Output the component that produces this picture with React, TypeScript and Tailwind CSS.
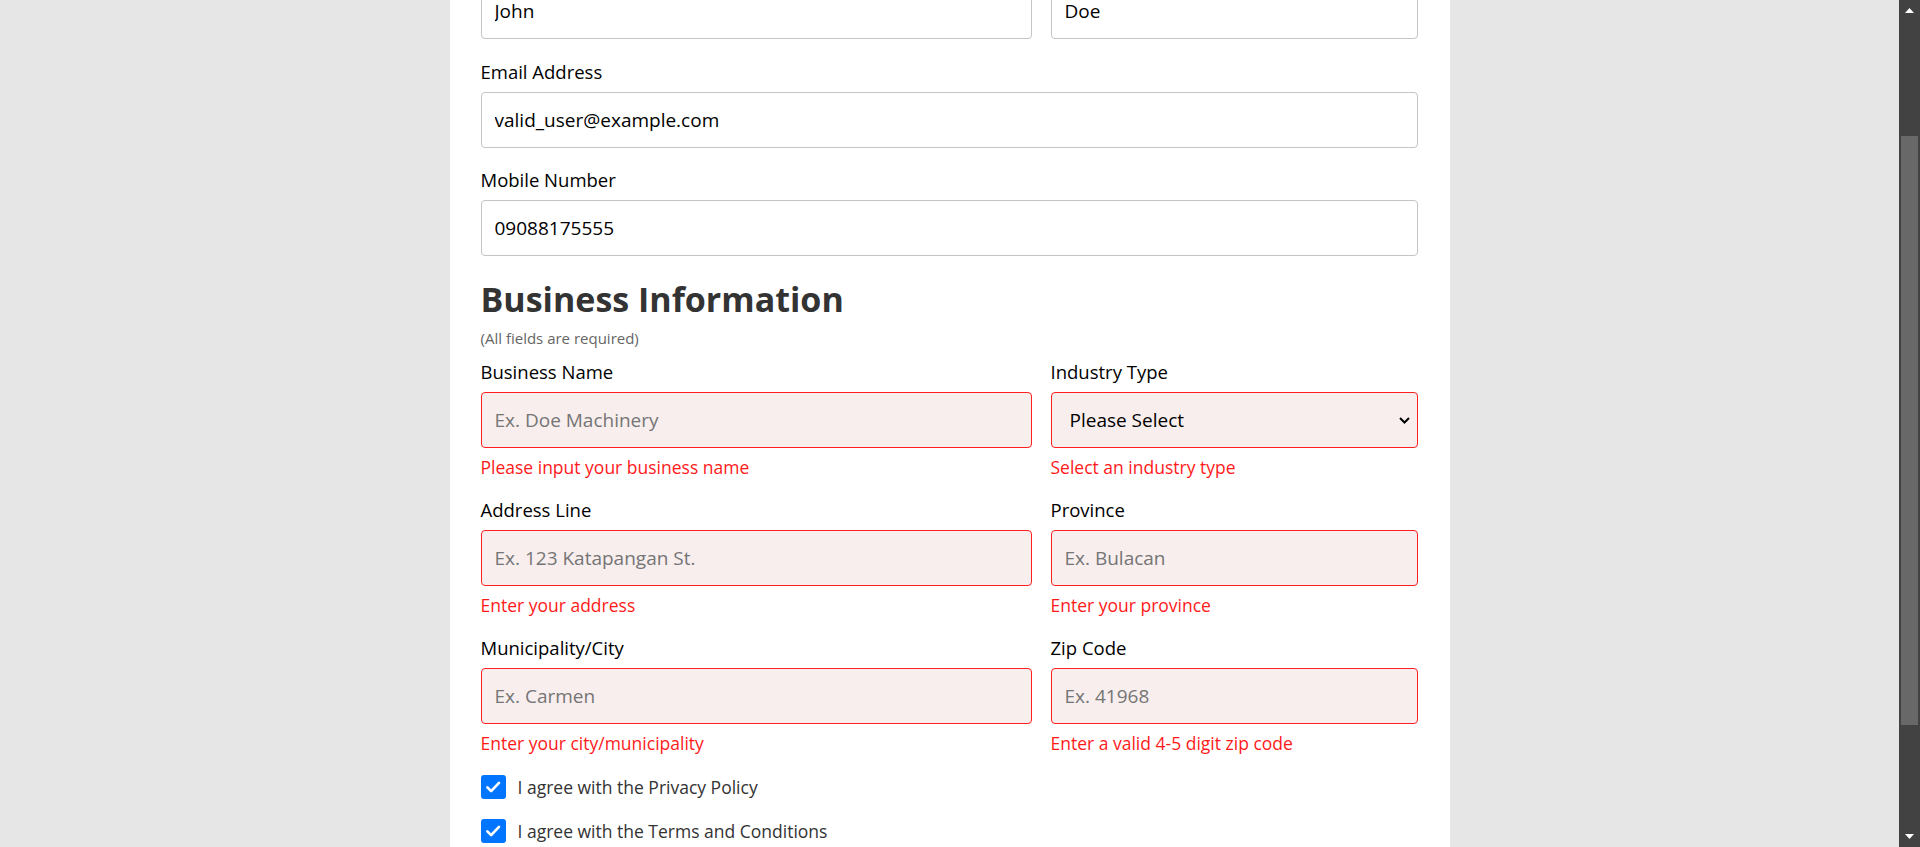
import React from 'react'

const baseInput =
  "h-[56px] w-full rounded-[4px] border px-[13px] text-[19px] text-black outline-none placeholder:text-[#757575] font-['Open_Sans',sans-serif]"

function Label({ children }: { children: React.ReactNode }) {
  return <label className="block text-[18.5px] leading-[26px] mb-[7px] text-black">{children}</label>
}

function ErrorText({ children }: { children: React.ReactNode }) {
  return <p className="mt-[6px] text-[17.5px] leading-[26px] text-[#ff1a1a]">{children}</p>
}

function ErrorField({ label, placeholder, error }: { label: string; placeholder: string; error: string }) {
  return (
    <div>
      <Label>{label}</Label>
      <input
        readOnly
        placeholder={placeholder}
        className={`${baseInput} border-[#ff1f1f] bg-[#f8eeee]`}
      />
      <ErrorText>{error}</ErrorText>
    </div>
  )
}

function Checkbox({ label }: { label: string }) {
  return (
    <div className="flex items-center h-[24px] gap-[12px]">
      <div className="w-[25px] h-[24px] rounded-[3px] bg-[#0075ff] flex items-center justify-center">
        <svg width="18" height="18" viewBox="0 0 24 24" fill="none">
          <path d="M4.5 12.5l5 5L20 6.5" stroke="white" strokeWidth="3.6" strokeLinecap="round" strokeLinejoin="round" />
        </svg>
      </div>
      <span className="text-[17.5px] text-[#333]">{label}</span>
    </div>
  )
}

function Scrollbar() {
  return (
    <div className="w-[21px] h-full bg-[#424242] flex flex-col items-center shrink-0">
      <div className="h-[21px] w-full flex items-center justify-center">
        <svg width="9" height="5" viewBox="0 0 9 5"><path d="M0 5L4.5 0L9 5Z" fill="white" /></svg>
      </div>
      <div className="h-[115px]" />
      <div className="h-[589px] w-[17px] bg-[#686868]" />
      <div className="flex-1" />
      <div className="h-[21px] w-full flex items-center justify-center">
        <svg width="9" height="5" viewBox="0 0 9 5"><path d="M0 0L4.5 5L9 0Z" fill="white" /></svg>
      </div>
    </div>
  )
}

export default function App() {
  return (
    <div className="flex h-[847px] w-[1920px] overflow-hidden bg-[#e6e6e6] font-['Open_Sans',sans-serif]">
      <div className="flex-1 flex justify-center">
        <div className="w-[1000px] bg-white pl-[31px] pr-[32px]">
          {/* personal info (scrolled) */}
          <div className="-mt-[17px] grid grid-cols-[551px_367px] gap-x-[19px]">
            <input readOnly defaultValue="John" className={`${baseInput} border-[#c4c4c4] bg-white`} />
            <input readOnly defaultValue="Doe" className={`${baseInput} border-[#c4c4c4] bg-white`} />
          </div>

          <div className="mt-[20px]">
            <Label>Email Address</Label>
            <input readOnly defaultValue="valid_user@example.com" className={`${baseInput} border-[#c4c4c4] bg-white`} />
          </div>

          <div className="mt-[19px]">
            <Label>Mobile Number</Label>
            <input readOnly defaultValue="09088175555" className={`${baseInput} border-[#c4c4c4] bg-white`} />
          </div>

          {/* business info */}
          <h2 className="mt-[20px] text-[34px] leading-[46px] font-bold text-[#333]">Business Information</h2>
          <p className="mt-[6px] text-[15px] leading-[20px] text-[#666]">(All fields are required)</p>

          <div className="mt-[11px] grid grid-cols-[551px_367px] gap-x-[19px] gap-y-[17px]">
            <ErrorField label="Business Name" placeholder="Ex. Doe Machinery" error="Please input your business name" />
            <div>
              <Label>Industry Type</Label>
              <div className="h-[56px] w-full rounded-[4px] border border-[#ff1f1f] bg-[#f8eeee] pl-[18px] pr-[7px] flex items-center justify-between">
                <span className="text-[19px] text-black">Please Select</span>
                <svg width="11" height="7" viewBox="0 0 11 7" fill="none">
                  <path d="M1 1l4.5 4.5L10 1" stroke="black" strokeWidth="2" />
                </svg>
              </div>
              <ErrorText>Select an industry type</ErrorText>
            </div>
            <ErrorField label="Address Line" placeholder="Ex. 123 Katapangan St." error="Enter your address" />
            <ErrorField label="Province" placeholder="Ex. Bulacan" error="Enter your province" />
            <ErrorField label="Municipality/City" placeholder="Ex. Carmen" error="Enter your city/municipality" />
            <ErrorField label="Zip Code" placeholder="Ex. 41968" error="Enter a valid 4-5 digit zip code" />
          </div>

          <div className="mt-[19px] flex flex-col gap-[20px]">
            <Checkbox label="I agree with the Privacy Policy" />
            <Checkbox label="I agree with the Terms and Conditions" />
          </div>
          <div className="h-[200px]" />
        </div>
      </div>
      <Scrollbar />
    </div>
  )
}
